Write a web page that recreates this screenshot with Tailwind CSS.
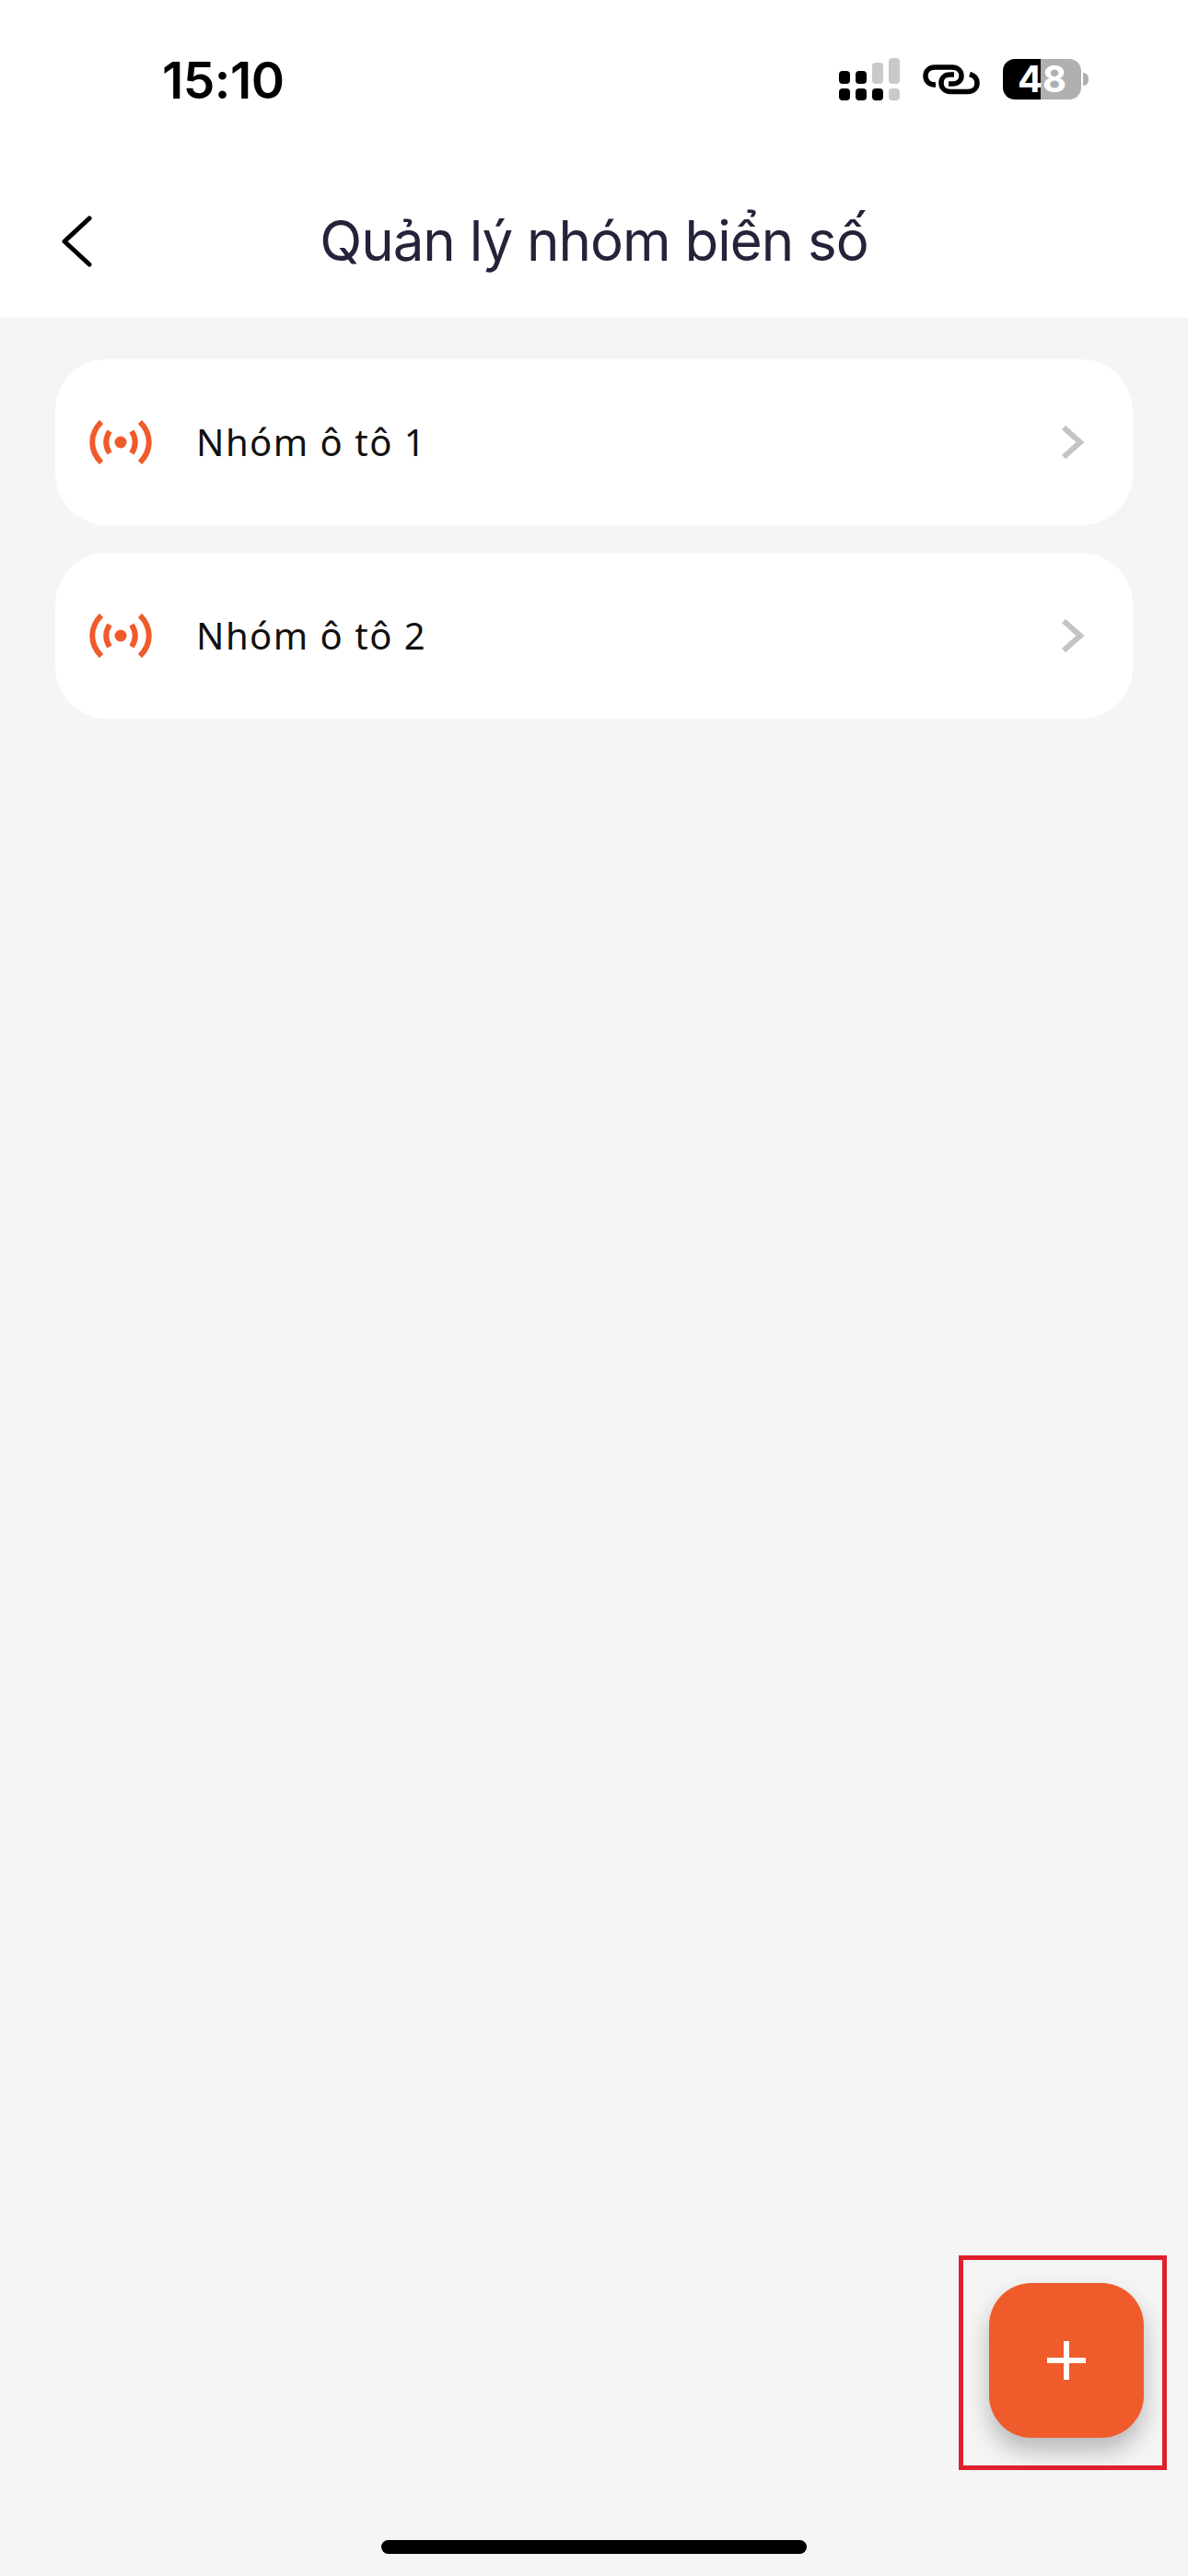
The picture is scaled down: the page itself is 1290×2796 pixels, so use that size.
<!DOCTYPE html>
<html lang="en">
<head>
    <meta charset="UTF-8">
    <meta name="viewport" content="width=device-width, initial-scale=1.0">
    <title>Quản lý nhóm biển số</title>
    <script src="https://cdn.jsdelivr.net/npm/@tailwindcss/browser@4"></script>
</head>
<body class="relative w-[1290px] h-[2796px] overflow-hidden bg-[#f5f5f5] flex flex-col font-['Inter',sans-serif]">
    <header class="bg-white h-[345px] shrink-0 flex flex-col">
        <!-- status bar -->
        <div class="h-[174px] shrink-0 flex items-start pt-[57px] pl-[176px] pr-[108px] justify-between">
            <span class="text-[55px] leading-[61px] font-semibold text-black tracking-[-0.5px]">15:10</span>
            <div class="flex items-center gap-[25px] pt-[6px]">
                <svg width="66" height="46" viewBox="0 0 66 46" class="block">
                    <rect x="0" y="14" width="12" height="14" rx="4" fill="#000"/>
                    <rect x="18" y="14" width="12" height="14" rx="4" fill="#000"/>
                    <rect x="36" y="5" width="12" height="23" rx="4" fill="#c9c9c9"/>
                    <rect x="54" y="0" width="12" height="28" rx="4" fill="#c9c9c9"/>
                    <rect x="0" y="33" width="12" height="13" rx="4" fill="#000"/>
                    <rect x="18" y="33" width="12" height="13" rx="4" fill="#000"/>
                    <rect x="36" y="33" width="12" height="13" rx="4" fill="#000"/>
                    <rect x="54" y="33" width="12" height="13" rx="4" fill="#c9c9c9"/>
                </svg>
                <svg width="62" height="38" viewBox="0 0 62 38" fill="none" stroke="#000" stroke-width="5.500" class="block">
                    <path d="M14 25H13C6.500 25 3 20.500 3 15.500C3 10 7 6 13 6H32C38 6 42 10 42 15.500C42 20.500 38 24 32 24H28"/>
                    <path d="M34 14H29C23.500 14 20 18 20 23C20 28.500 24 32.500 30 32.500H49C55 32.500 59 28.500 59 23C59 18.500 56 15 51 13.500"/>
                </svg>
                <div class="flex items-center gap-[2px]">
                    <div class="w-[85px] h-[44px] rounded-[13px] bg-[linear-gradient(90deg,#000_41px,#b0b0b0_41px)] flex items-center justify-center">
                        <span class="text-[40px] font-bold text-white leading-none">48</span>
                    </div>
                    <div class="w-[6px] h-[14px] rounded-r-full bg-[#b0b0b0]"></div>
                </div>
            </div>
        </div>
        <!-- title row -->
        <div class="relative flex-1 flex items-start justify-center pt-[51px]">
            <svg width="36" height="56" viewBox="0 0 36 56" fill="none" stroke="#000" stroke-width="5" stroke-linecap="round" stroke-linejoin="round" class="absolute left-[66px] top-[60px]">
                <path d="M31 3L4 28L31 53" />
            </svg>
            <h1 class="text-[60px] leading-[72px] font-normal text-[#25233a] tracking-[-1px]">Quản lý nhóm biển số</h1>
        </div>
    </header>

    <main class="flex flex-col gap-[30px] px-[60px] pt-[45px]">
        <div class="h-[180px] bg-white rounded-[56px] flex items-center pl-[37px] pr-[52px]">
            <svg width="68" height="48" viewBox="0 0 68 48" fill="none" stroke="#f05b2c" stroke-width="6" class="shrink-0">
                <path d="M13 2C0 15 0 33 13 46"/>
                <path d="M55 2C68 15 68 33 55 46"/>
                <path d="M22 12C17 20 17 28 22 36"/>
                <path d="M46 12C51 20 51 28 46 36"/>
                <circle cx="34" cy="24" r="6.500" fill="#f05b2c" stroke="none"/>
            </svg>
            <span class="ml-[48px] text-[40px] text-[#111] tracking-[1.500px] font-['Noto_Sans',sans-serif]">Nhóm ô tô 1</span>
            <svg width="26" height="38" viewBox="0 0 26 38" fill="none" stroke="#c4c4c4" stroke-width="6" class="ml-auto">
                <path d="M3 3L21 19L3 35"/>
            </svg>
        </div>
        <div class="h-[180px] bg-white rounded-[56px] flex items-center pl-[37px] pr-[52px]">
            <svg width="68" height="48" viewBox="0 0 68 48" fill="none" stroke="#f05b2c" stroke-width="6" class="shrink-0">
                <path d="M13 2C0 15 0 33 13 46"/>
                <path d="M55 2C68 15 68 33 55 46"/>
                <path d="M22 12C17 20 17 28 22 36"/>
                <path d="M46 12C51 20 51 28 46 36"/>
                <circle cx="34" cy="24" r="6.500" fill="#f05b2c" stroke="none"/>
            </svg>
            <span class="ml-[48px] text-[40px] text-[#111] tracking-[1.500px] font-['Noto_Sans',sans-serif]">Nhóm ô tô 2</span>
            <svg width="26" height="38" viewBox="0 0 26 38" fill="none" stroke="#c4c4c4" stroke-width="6" class="ml-auto">
                <path d="M3 3L21 19L3 35"/>
            </svg>
        </div>
    </main>

    <!-- floating add button with the red highlight box -->
    <div class="absolute left-[1041px] top-[2448px] w-[226px] h-[233px] border-[5px] border-[#e0202c]"></div>
    <button class="absolute left-[1074px] top-[2478px] w-[168px] h-[168px] rounded-[46px] bg-[#f05b2c] shadow-[0_14px_26px_rgba(0,0,0,0.25)] flex items-center justify-center">
        <svg width="42" height="42" viewBox="0 0 42 42" fill="#fff">
            <rect x="18" y="0" width="6" height="42"/>
            <rect x="0" y="18" width="42" height="6"/>
        </svg>
    </button>

    <div class="absolute left-[414px] top-[2757px] w-[462px] h-[15px] rounded-full bg-black"></div>
</body>
</html>
